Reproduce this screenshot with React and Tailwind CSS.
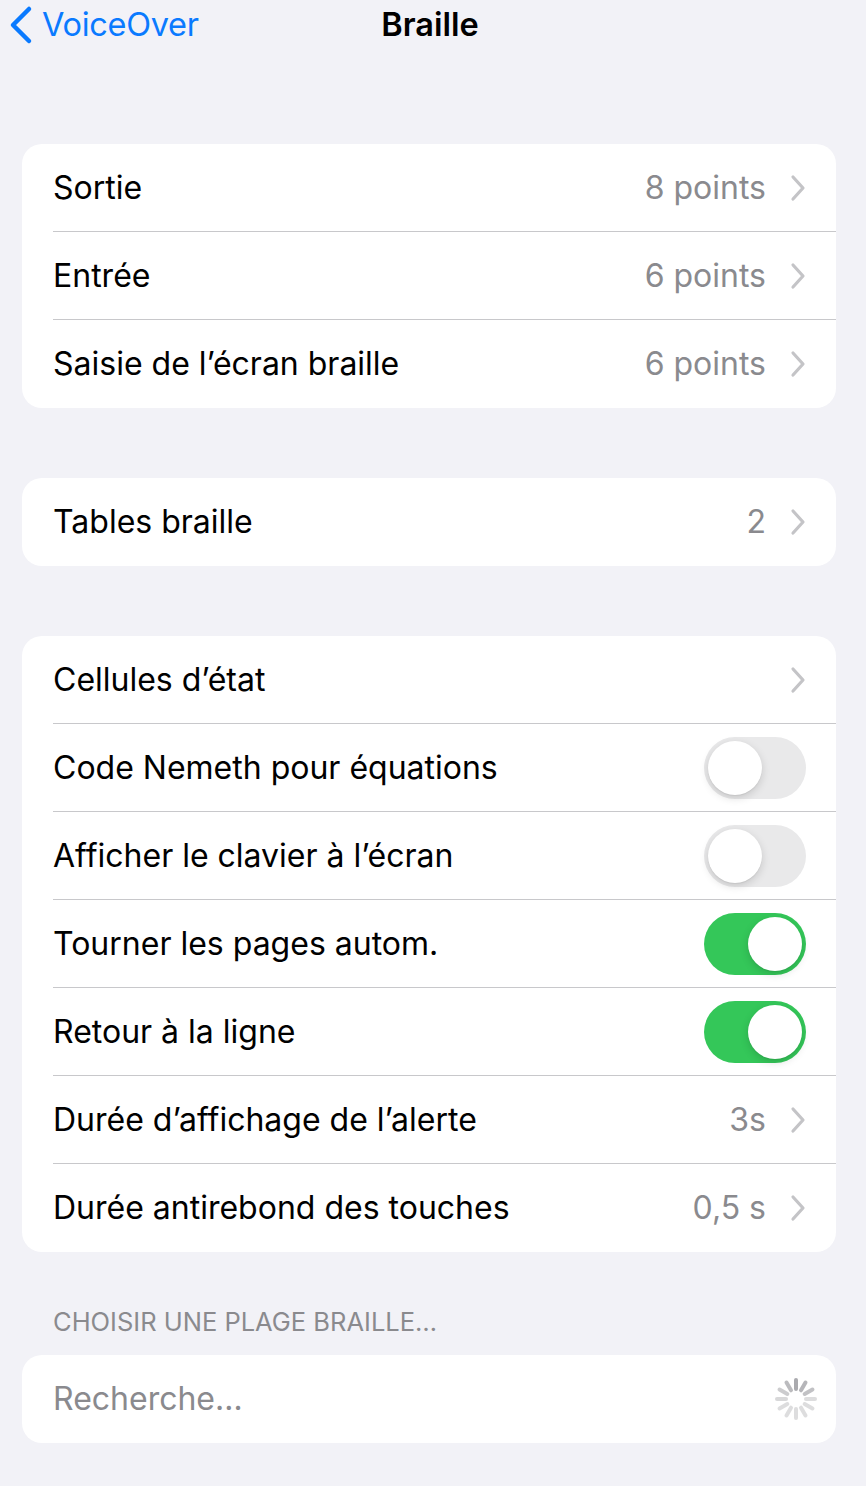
const font = { fontFamily: "Inter, 'Noto Sans', sans-serif" };

const Chevron = () => (
  <svg width="16" height="28" viewBox="0 0 16 28" className="ml-6 shrink-0">
    <path d="M3 3 L13 14 L3 25" fill="none" stroke="#c4c4c7" strokeWidth="3.2" strokeLinecap="round" strokeLinejoin="round" />
  </svg>
);

const Toggle = ({ on }) => (
  <div
    className={`w-[102px] h-[62px] rounded-full p-[4px] flex ${on ? "bg-[#34c759] justify-end" : "bg-[#e9e9ea] justify-start"}`}
  >
    <div className="w-[54px] h-[54px] rounded-full bg-white shadow-[0_3px_8px_rgba(0,0,0,0.15),0_1px_1px_rgba(0,0,0,0.06)]" />
  </div>
);

const Row = ({ label, value, chevron, toggle, last }) => (
  <div className="pl-[31px] h-[88px] flex">
    <div className={`flex-1 flex items-center pr-[30px] ${last ? "" : "border-b border-[#c8c8cb]"}`}>
      <span className="flex-1 text-[32px] text-black">{label}</span>
      {value && <span className="text-[32px] text-[#8a8a8e]">{value}</span>}
      {chevron && <Chevron />}
      {toggle !== undefined && <Toggle on={toggle} />}
    </div>
  </div>
);

const Card = ({ rows }) => (
  <div className="ml-[22px] mr-[30px] bg-white rounded-[20px] overflow-hidden">
    {rows.map((r, i) => (
      <Row key={i} {...r} last={i === rows.length - 1} />
    ))}
  </div>
);

const Spinner = () => {
  const spokes = Array.from({ length: 12 });
  return (
    <svg width="44" height="44" viewBox="-22 -22 44 44">
      {spokes.map((_, i) => {
        const a = (i * 30 * Math.PI) / 180;
        const x1 = Math.sin(a) * 10;
        const y1 = -Math.cos(a) * 10;
        const x2 = Math.sin(a) * 19;
        const y2 = -Math.cos(a) * 19;
        const op = [0.75, 0.65, 0.55, 0.3, 0.3, 0.3, 0.3, 0.3, 0.3, 0.35, 0.45, 0.6][i];
        return (
          <line key={i} x1={x1} y1={y1} x2={x2} y2={y2} stroke="#8e8e93" strokeOpacity={op} strokeWidth="4" strokeLinecap="round" />
        );
      })}
    </svg>
  );
};

export default function App() {
  return (
    <div className="min-h-[1486px] w-[866px] bg-[#f2f2f7]" style={font}>
      <div className="relative h-[50px] flex items-center">
        <div className="flex items-center pl-[8px] text-[#0a7aff]">
          <svg width="26" height="40" viewBox="0 0 26 40">
            <path d="M21 4 L5 20 L21 36" fill="none" stroke="#0a7aff" strokeWidth="4.5" strokeLinecap="round" strokeLinejoin="round" />
          </svg>
          <span className="ml-[8px] text-[32.5px] tracking-[-0.3px]">VoiceOver</span>
        </div>
        <div className="absolute left-0 right-[6px] text-center text-[32.5px] font-semibold text-black pointer-events-none">
          Braille
        </div>
      </div>

      <div className="h-[94px]" />
      <Card
        rows={[
          { label: "Sortie", value: "8 points", chevron: true },
          { label: "Entrée", value: "6 points", chevron: true },
          { label: "Saisie de l’écran braille", value: "6 points", chevron: true },
        ]}
      />
      <div className="h-[70px]" />
      <Card rows={[{ label: "Tables braille", value: "2", chevron: true }]} />
      <div className="h-[70px]" />
      <Card
        rows={[
          { label: "Cellules d’état", chevron: true },
          { label: "Code Nemeth pour équations", toggle: false },
          { label: "Afficher le clavier à l’écran", toggle: false },
          { label: "Tourner les pages autom.", toggle: true },
          { label: "Retour à la ligne", toggle: true },
          { label: "Durée d’affichage de l’alerte", value: "3s", chevron: true },
          { label: "Durée antirebond des touches", value: "0,5 s", chevron: true },
        ]}
      />
      <div className="pt-[55px] pb-[18px] pl-[53px] text-[25.5px] text-[#8a8a8e] uppercase leading-[30px]">
        Choisir une plage braille…
      </div>
      <div className="ml-[22px] mr-[30px] bg-white rounded-[20px] h-[88px] pl-[31px] pr-[18px] flex items-center">
        <span className="flex-1 text-[32px] text-[#8a8a8e]">Recherche…</span>
        <Spinner />
      </div>
    </div>
  );
}
